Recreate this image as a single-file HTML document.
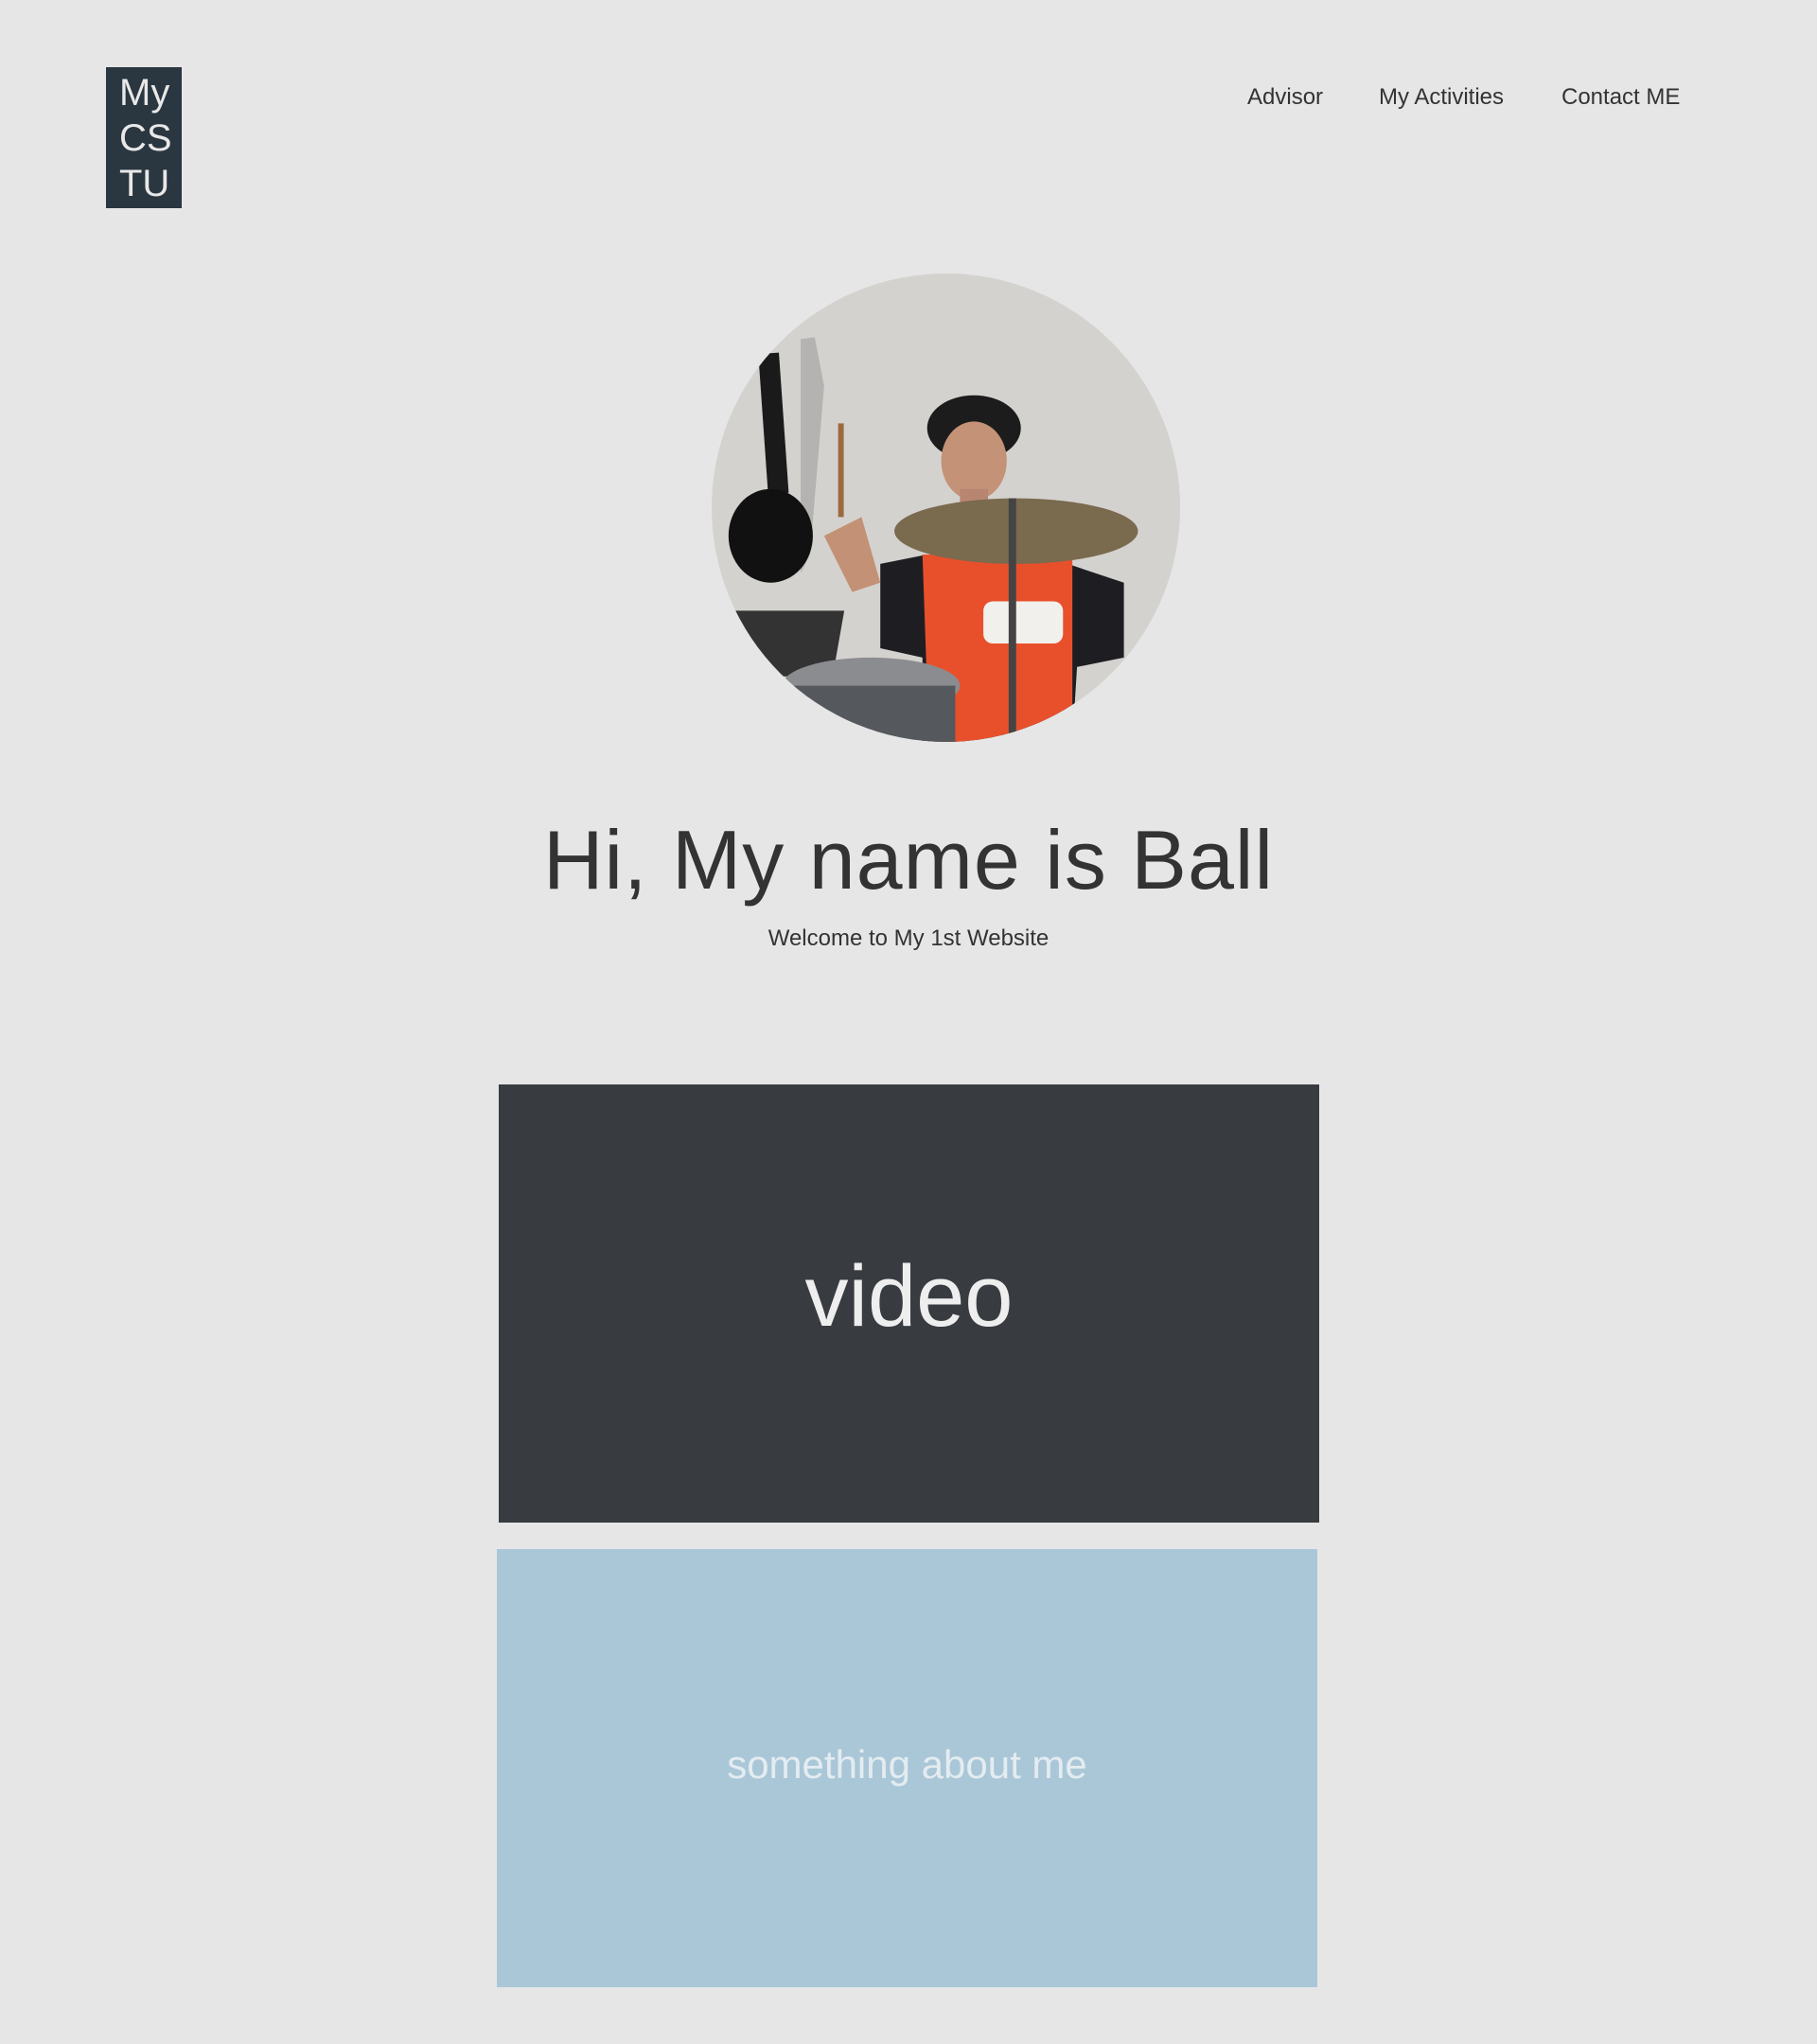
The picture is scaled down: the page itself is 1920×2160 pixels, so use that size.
<!DOCTYPE html>
<html><head><meta charset="utf-8"><style>
html,body{margin:0;padding:0}
body{width:1920px;height:2160px;background:#e6e6e6;position:relative;overflow:hidden;font-family:"Liberation Sans",sans-serif;color:#333}
.logo{position:absolute;left:112px;top:71px;width:80px;height:149px;background:#2a3640;color:#e8e8e8;font-size:40px;line-height:48px;padding-left:14px;box-sizing:border-box;padding-top:3px;font-weight:300}
.nav a{position:absolute;top:89px;font-size:24px;color:#333;text-decoration:none}
.photo{position:absolute;left:752px;top:289px;width:495px;height:495px;border-radius:50%;overflow:hidden}
h1{position:absolute;left:0;width:1920px;top:858px;margin:0;text-align:center;font-size:88px;font-weight:normal;color:#333;letter-spacing:1px}
.sub{position:absolute;left:0;width:1920px;top:978px;text-align:center;font-size:24px;color:#333}
.video{position:absolute;left:527px;top:1146px;width:867px;height:463px;background:#383c40;color:#eee;font-size:92px;text-align:center;line-height:448px}
.about{position:absolute;left:525px;top:1637px;width:867px;height:463px;background:#aac7d8;color:#e4ecf1;font-size:42px;text-align:center;line-height:456px}
</style></head><body>
<div class="logo">My<br>CS<br>TU</div>
<div class="nav"><a style="left:1318px">Advisor</a><a style="left:1457px">My Activities</a><a style="left:1650px">Contact ME</a></div>
<div class="photo"><svg width="495" height="495" viewBox="0 0 500 500">
<rect width="500" height="500" fill="#d4d2cf"/>
<path d="M95 70 L110 68 L120 120 L105 300 L95 320Z" fill="#7a7a7a" opacity=".35"/>
<rect x="55" y="85" width="22" height="150" fill="#1a1a1a" transform="rotate(-4 66 160)"/>
<ellipse cx="63" cy="280" rx="45" ry="50" fill="#111"/>
<rect x="85" y="360" width="120" height="70" fill="#333" transform="skewX(-10)"/>
<ellipse cx="280" cy="165" rx="50" ry="35" fill="#1c1c1c"/>
<ellipse cx="280" cy="200" rx="35" ry="42" fill="#c49277"/>
<rect x="265" y="230" width="30" height="30" fill="#b88670"/>
<path d="M180 310 L230 300 L350 300 L440 330 L440 410 L390 420 L385 500 L225 500 L225 410 L180 400Z" fill="#1e1e22"/>
<path d="M225 300 L385 300 L385 500 L232 500Z" fill="#e8502c"/>
<rect x="290" y="350" width="85" height="45" fill="#f2f0ec" rx="10"/>
<rect x="135" y="160" width="6" height="100" fill="#9b6a3c"/>
<path d="M120 280 L160 260 L180 330 L150 340Z" fill="#c39176"/>
<ellipse cx="325" cy="275" rx="130" ry="35" fill="#7a6a4e"/>
<rect x="317" y="240" width="8" height="260" fill="#444"/>
<ellipse cx="170" cy="440" rx="95" ry="30" fill="#8a8c90"/>
<rect x="80" y="440" width="180" height="60" fill="#55585c"/>
</svg></div>
<h1>Hi, My name is Ball</h1>
<div class="sub">Welcome to My 1st Website</div>
<div class="video">video</div>
<div class="about">something about me</div>
</body></html>
